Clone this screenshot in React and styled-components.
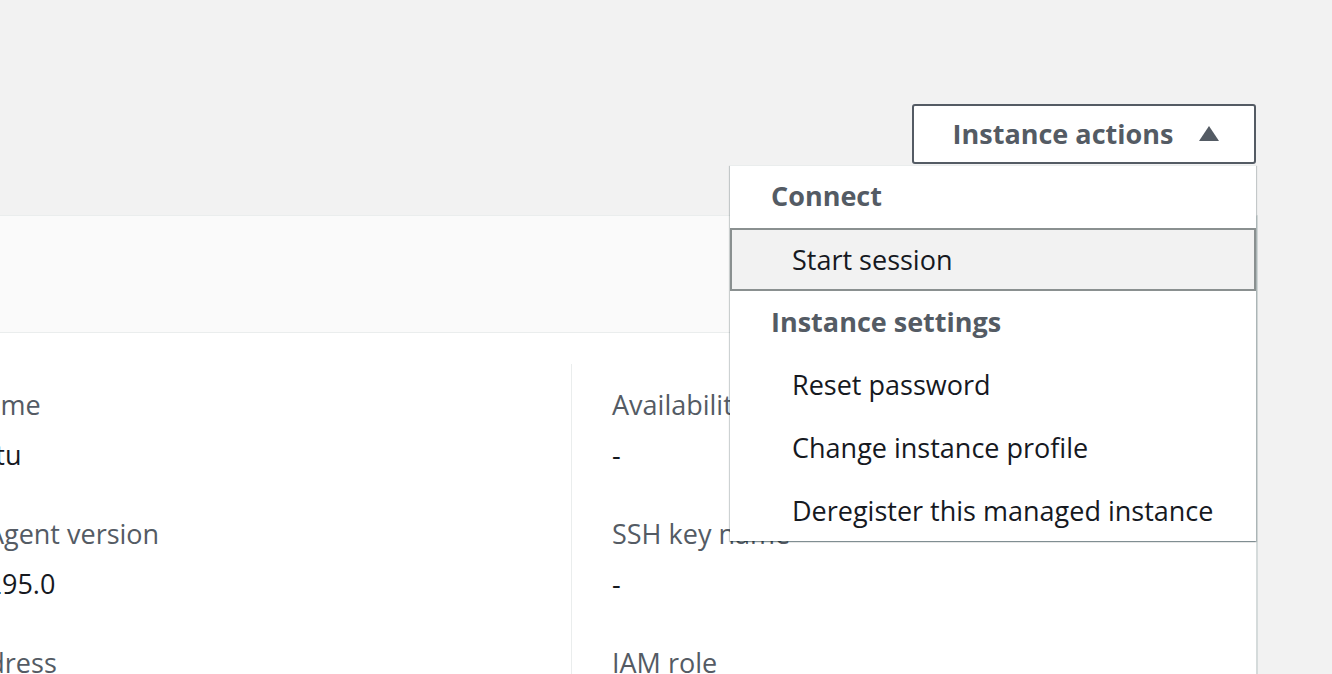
import React from 'react';
import styled, { createGlobalStyle } from 'styled-components';

const GlobalStyle = createGlobalStyle`
  html, body {
    margin: 0;
    padding: 0;
    background: #f2f2f2;
    overflow: hidden;
  }
  * {
    box-sizing: border-box;
  }
`;

const Page = styled.div`
  width: 1332px;
  height: 674px;
  overflow: hidden;
  background: #f2f2f2;
  font-family: "Open Sans", "Noto Sans", sans-serif;
  display: flex;
  flex-direction: column;
`;

const TopBar = styled.div`
  height: 215px;
  flex-shrink: 0;
  display: flex;
  justify-content: flex-end;
  align-items: flex-start;
  padding: 104px 76px 0 0;
`;

const ActionsWrap = styled.div`
  position: relative;
  z-index: 5;
`;

const ActionsButton = styled.button`
  width: 344px;
  height: 60px;
  display: flex;
  align-items: center;
  justify-content: center;
  gap: 26px;
  padding: 0 0 2px 4px;
  background: #fff;
  border: 2px solid #545b64;
  border-radius: 3px;
  color: #545b64;
  font-family: inherit;
  font-size: 27px;
  font-weight: 700;
  cursor: pointer;
`;

const Menu = styled.ul`
  position: absolute;
  top: 61px;
  right: 0;
  width: 526px;
  margin: 0;
  padding: 0;
  list-style: none;
  background: #fff;
  border-top: 1px solid #eaeded;
  box-shadow: 0 1px 1px 0 rgba(0, 28, 36, 0.3), 1px 1px 1px 0 rgba(0, 28, 36, 0.15),
    -1px 1px 1px 0 rgba(0, 28, 36, 0.15);
`;

const GroupTitle = styled.li`
  height: 62px;
  display: flex;
  align-items: center;
  padding: 0 0 ${(p) => (p.$first ? 4 : 2)}px 41px;
  color: #545b64;
  font-size: 27px;
  font-weight: 700;
`;

const MenuItem = styled.li`
  height: ${(p) => (p.$last ? 62 : 63)}px;
  display: flex;
  align-items: center;
  padding: 0 0 0 ${(p) => (p.$active ? 60 : 62)}px;
  color: #16191f;
  font-size: 27px;
  background: ${(p) => (p.$active ? '#f2f2f2' : '#fff')};
  border: ${(p) => (p.$active ? '2px solid #8a9090' : 'none')};
`;

const Card = styled.section`
  margin-left: -120px;
  width: 1378px;
  flex: 1;
  background: #fff;
  border-top: 1px solid #eaeded;
  border-right: 2px solid #d5dbdb;
  display: flex;
  flex-direction: column;
`;

const CardHeader = styled.div`
  height: 117px;
  flex-shrink: 0;
  background: #fafafa;
  border-bottom: 1px solid #eaeded;
`;

const CardBody = styled.div`
  flex: 1;
  display: grid;
  grid-template-columns: 691px 1fr;
  padding-top: 31px;
`;

const Column = styled.div`
  padding: 21px 0 0 ${(p) => (p.$divider ? 40 : 46)}px;
  border-left: ${(p) => (p.$divider ? '1px solid #eaeded' : 'none')};
  display: flex;
  flex-direction: column;
  gap: 39px;
  white-space: nowrap;
`;

const Field = styled.div`
  display: flex;
  flex-direction: column;
  gap: 10px;
`;

const Label = styled.div`
  font-size: 27px;
  line-height: 40px;
  color: #545b64;
`;

const Value = styled.div`
  font-size: 27px;
  line-height: 40px;
  color: #16191f;
`;

const Caret = () => (
  <svg width="20" height="15" viewBox="0 0 20 15">
    <path d="M10 0 L20 15 L0 15 Z" fill="#545b64" />
  </svg>
);

const columns = [
  [
    ['OS name', 'Ubuntu'],
    ['SSM Agent version', '3.0.1295.0'],
    ['IP address', '10.0.0.12'],
  ],
  [
    ['Availability zone', '-'],
    ['SSH key name', '-'],
    ['IAM role', '-'],
  ],
];

export default function App() {
  return (
    <Page>
      <GlobalStyle />
      <TopBar>
        <ActionsWrap>
          <ActionsButton>
            Instance actions
            <Caret />
          </ActionsButton>
          <Menu>
            <GroupTitle $first>Connect</GroupTitle>
            <MenuItem $active>Start session</MenuItem>
            <GroupTitle>Instance settings</GroupTitle>
            <MenuItem>Reset password</MenuItem>
            <MenuItem>Change instance profile</MenuItem>
            <MenuItem $last>Deregister this managed instance</MenuItem>
          </Menu>
        </ActionsWrap>
      </TopBar>
      <Card>
        <CardHeader />
        <CardBody>
          {columns.map((fields, i) => (
            <Column key={i} $divider={i > 0}>
              {fields.map(([label, value]) => (
                <Field key={label}>
                  <Label>{label}</Label>
                  <Value>{value}</Value>
                </Field>
              ))}
            </Column>
          ))}
        </CardBody>
      </Card>
    </Page>
  );
}
